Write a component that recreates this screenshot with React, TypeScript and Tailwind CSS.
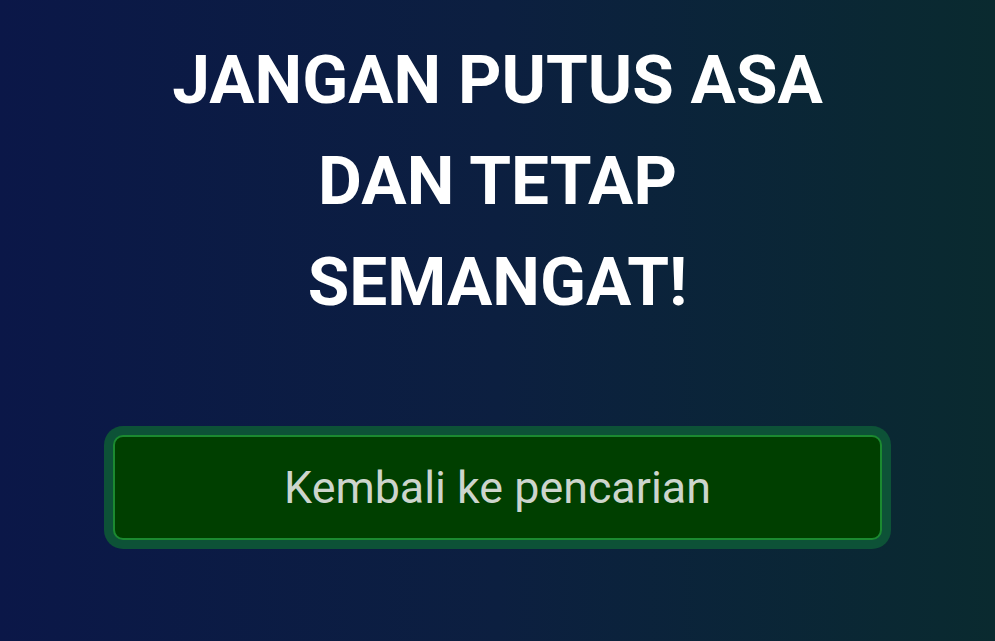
import React from 'react';

export default function App() {
    return (
        <div
            className="w-full h-[641px] flex flex-col items-center bg-gradient-to-r from-[#0b1748] via-[#0c1f40] to-[#0a2a2f]"
            style={{ fontFamily: 'Roboto, "Liberation Sans", sans-serif' }}
        >
            <h1 className="mt-[29px] w-[700px] text-center text-white font-bold text-[67.5px] leading-[101px]">
                JANGAN PUTUS ASA DAN TETAP SEMANGAT!
            </h1>

            <button className="mt-[103px] w-[769px] h-[105px] rounded-[10px] border-2 border-[#1b8a30] bg-[#003f00] shadow-[0_0_0_9px_#0d5237] text-[#cdd5cd] text-[44.8px]">
                Kembali ke pencarian
            </button>
        </div>
    );
}
